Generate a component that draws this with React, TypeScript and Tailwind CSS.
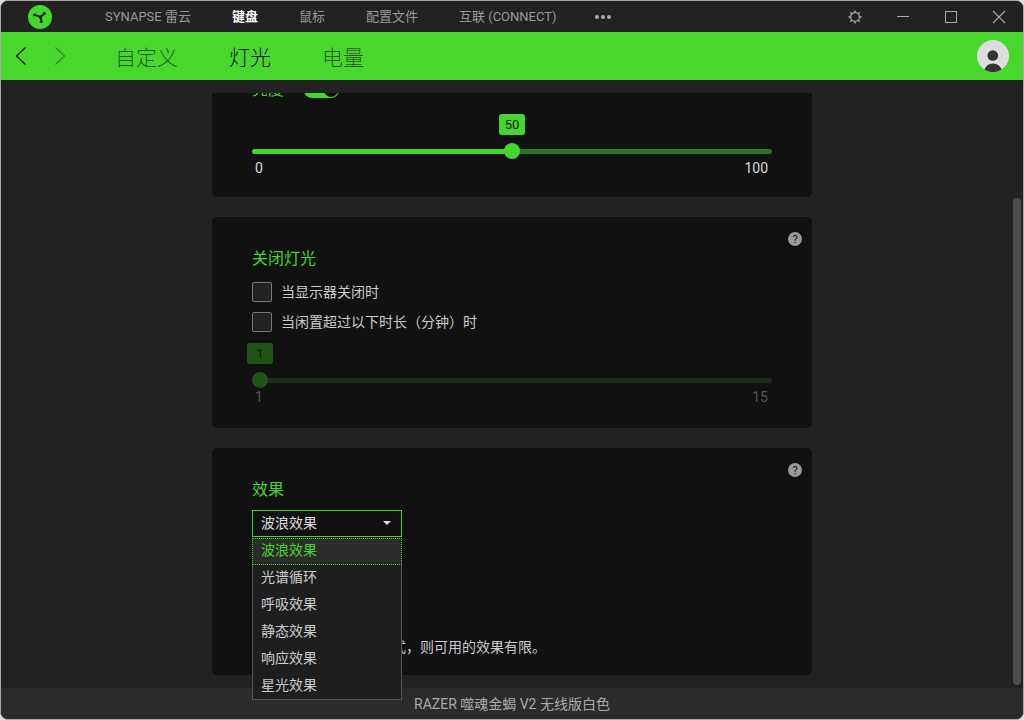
import React, { useState } from "react";
import clsx from "clsx";

const mainTabs = ["SYNAPSE 雷云", "键盘", "鼠标", "配置文件", "互联 (CONNECT)"];
const subTabs = ["自定义", "灯光", "电量"];
const effects = [
  "波浪效果",
  "光谱循环",
  "呼吸效果",
  "静态效果",
  "响应效果",
  "星光效果",
];

function Logo() {
  return (
    <svg width="24" height="24" viewBox="0 0 24 24" aria-hidden="true">
      <circle cx="12" cy="12" r="12" fill="#44d62c" />
      <g fill="none" stroke="#151a14" strokeLinecap="round">
        <path d="M12.6 12 6.6 9.8M12.6 12 16.4 8.4M12.6 12 13.4 16.4" strokeWidth="1.8" />
        <path d="M5.8 10.6 7 9.2M15.8 7.6 17.4 8.8M12.4 17.2 14.4 16.6" strokeWidth="1.6" />
      </g>
      <circle cx="12.4" cy="12" r="1.8" fill="#151a14" />
    </svg>
  );
}

function GearIcon() {
  return (
    <svg width="14" height="14" viewBox="0 0 14 14" fill="none" stroke="currentColor" aria-hidden="true">
      <circle cx="7" cy="7" r="4.4" strokeWidth="1.2" />
      <path
        d="M7 .4v2M7 11.6v2M.4 7h2M11.6 7h2M2.3 2.3l1.4 1.4M10.3 10.3l1.4 1.4M2.3 11.7l1.4-1.4M10.3 3.7l1.4-1.4"
        strokeWidth="1.5"
      />
    </svg>
  );
}

function WindowButton({ label, children }: { label: string; children: React.ReactNode }) {
  return (
    <button aria-label={label} className="flex h-full w-12 items-center justify-center text-[#a8a8a8]">
      {children}
    </button>
  );
}

function TitleBar() {
  return (
    <header className="flex h-[31px] items-center bg-[#222222] pl-[27px]">
      <Logo />
      <nav className="ml-[53px] flex items-center gap-[41px] text-[13px] leading-5 whitespace-nowrap">
        {mainTabs.map((tab) => (
          <a
            key={tab}
            href="#"
            className={clsx(tab === "键盘" ? "font-bold text-white" : "text-[#999999]")}
          >
            {tab}
          </a>
        ))}
      </nav>
      <button aria-label="更多" className="ml-[38px] flex gap-[2px]">
        <span className="size-1 rounded-full bg-[#aaaaaa]" />
        <span className="size-1 rounded-full bg-[#aaaaaa]" />
        <span className="size-1 rounded-full bg-[#aaaaaa]" />
      </button>
      <div className="ml-auto flex h-full">
        <WindowButton label="设置">
          <GearIcon />
        </WindowButton>
        <WindowButton label="最小化">
          <span className="h-px w-3 bg-current" />
        </WindowButton>
        <WindowButton label="最大化">
          <span className="size-3 border border-current" />
        </WindowButton>
        <WindowButton label="关闭">
          <svg width="14" height="14" viewBox="0 0 14 14" stroke="currentColor" strokeWidth="1.1" aria-hidden="true">
            <path d="M1 1l12 12M13 1L1 13" />
          </svg>
        </WindowButton>
      </div>
    </header>
  );
}

function SubBar() {
  return (
    <div className="flex h-12 items-center bg-[#47d72d] pr-[14px] pl-[14px] text-[#111111]">
      <button aria-label="后退">
        <svg width="12" height="20" viewBox="0 0 12 20" fill="none" stroke="currentColor" strokeWidth="1.2">
          <path d="M10.5 1.5 1.5 10l9 8.5" />
        </svg>
      </button>
      <button aria-label="前进" className="ml-[27px] opacity-40">
        <svg width="12" height="20" viewBox="0 0 12 20" fill="none" stroke="currentColor" strokeWidth="1.2">
          <path d="M1.5 1.5l9 8.5-9 8.5" />
        </svg>
      </button>
      <nav className="ml-[49px] flex gap-[51px] pt-[3px] text-[21px] leading-8 font-light whitespace-nowrap">
        {subTabs.map((tab) => (
          <a
            key={tab}
            href="#"
            className={clsx(tab === "灯光" ? "text-[#111111]" : "text-[#111111]/65")}
          >
            {tab}
          </a>
        ))}
      </nav>
      <button aria-label="个人资料" className="ml-auto">
        <svg width="32" height="32" viewBox="0 0 32 32">
          <circle cx="16" cy="16" r="16" fill="#dddddd" />
          <circle cx="15.8" cy="15.5" r="5.3" fill="#333333" />
          <path d="M7.4 29.5C9 25.5 12 23.4 16 23.4s7 2.1 8.6 6.1A16 16 0 0 1 7.4 29.5z" fill="#333333" />
        </svg>
      </button>
    </div>
  );
}

function HelpButton() {
  return (
    <button
      aria-label="帮助"
      className="absolute top-[15px] right-[10px] flex size-[14px] items-center justify-center rounded-full bg-[#999999] text-[11px] leading-none text-[#111111]"
    >
      ?
    </button>
  );
}

interface SliderProps {
  label: string;
  min: number;
  max: number;
  initial: number;
  disabled?: boolean;
}

function Slider({ label, min, max, initial, disabled }: SliderProps) {
  const [value, setValue] = useState(initial);
  const ratio = (value - min) / (max - min);
  const thumbLeft = `calc(8px + (100% - 16px) * ${ratio})`;
  const fill = disabled ? "#1d3218" : "#44d62c";
  const rest = disabled ? "#1b2c18" : "#2b7620";

  return (
    <div>
      <div className="relative h-[21px]">
        <output
          className={clsx(
            "absolute flex h-[21px] w-[26px] -translate-x-1/2 items-center justify-center rounded-[3px] text-[13px] text-[#111111]",
            disabled ? "bg-[#1f5416]" : "bg-[#44d62c]"
          )}
          style={{ left: thumbLeft }}
        >
          {value}
        </output>
      </div>
      <input
        type="range"
        aria-label={label}
        min={min}
        max={max}
        value={value}
        disabled={disabled}
        onChange={(e) => setValue(Number(e.target.value))}
        className={clsx(
          "mt-2 block h-4 w-full appearance-none bg-transparent",
          "[&::-webkit-slider-runnable-track]:h-[5px] [&::-webkit-slider-runnable-track]:rounded-full [&::-webkit-slider-runnable-track]:[background:var(--track)]",
          "[&::-webkit-slider-thumb]:-mt-[6px] [&::-webkit-slider-thumb]:size-4 [&::-webkit-slider-thumb]:appearance-none [&::-webkit-slider-thumb]:rounded-full",
          disabled
            ? "[&::-webkit-slider-thumb]:bg-[#1f5416]"
            : "[&::-webkit-slider-thumb]:bg-[#44d62c]"
        )}
        style={
          {
            "--track": `linear-gradient(to right, ${fill} ${ratio * 100}%, ${rest} ${ratio * 100}%)`,
          } as React.CSSProperties
        }
      />
      <div
        className={clsx(
          "flex justify-between pr-1 pl-[3px] text-sm leading-[18px]",
          disabled ? "text-[#555555]" : "text-[#dddddd]"
        )}
      >
        <span>{min}</span>
        <span>{max}</span>
      </div>
    </div>
  );
}

function Checkbox({ label }: { label: string }) {
  return (
    <label className="flex items-center gap-[9px] text-sm leading-5 text-[#cccccc]">
      <input
        type="checkbox"
        className="size-5 appearance-none rounded-xs border border-[#777777] bg-[#222222] checked:bg-[#44d62c]"
      />
      {label}
    </label>
  );
}

function CardTitle({ children }: { children: React.ReactNode }) {
  return <h2 className="text-base leading-5 text-[#44d62c]">{children}</h2>;
}

function BrightnessCard() {
  return (
    // scrolled part way out of view
    <div className="overflow-hidden">
      <section className="-mt-[45px] rounded-[5px] bg-[#111111] px-10 pt-8 pb-5">
        <div className="flex h-5 items-center gap-5">
          <CardTitle>亮度</CardTitle>
          <button
            role="switch"
            aria-checked="true"
            aria-label="亮度"
            className="flex h-4 w-[35px] items-center justify-end rounded-full bg-[#44d62c] p-px"
          >
            <span className="size-[14px] rounded-full bg-[#111111]" />
          </button>
        </div>
        <div className="mt-[14px]">
          <Slider label="亮度" min={0} max={100} initial={50} />
        </div>
      </section>
    </div>
  );
}

function SwitchOffCard() {
  return (
    <section className="relative rounded-[5px] bg-[#111111] px-10 pt-8 pb-[22px]">
      <HelpButton />
      <CardTitle>关闭灯光</CardTitle>
      <div className="mt-[13px] mb-[11px] flex flex-col gap-[10px]">
        <Checkbox label="当显示器关闭时" />
        <Checkbox label="当闲置超过以下时长（分钟）时" />
      </div>
      <Slider label="闲置时长" min={1} max={15} initial={1} disabled />
    </section>
  );
}

function EffectCard() {
  const [effect, setEffect] = useState(effects[0]);

  return (
    <section className="relative rounded-[5px] bg-[#111111] px-10 pt-8 pb-[18px]">
      <HelpButton />
      <CardTitle>效果</CardTitle>
      <div className="relative z-10 mt-[10px] w-[150px] text-sm">
        <select
          aria-label="效果"
          value={effect}
          onChange={(e) => setEffect(e.target.value)}
          className="block h-[27px] w-full appearance-none border border-[#44d62c] bg-[#111111] px-2 pb-[2px] leading-5 text-[#dddddd] outline-none"
        >
          {effects.map((name) => (
            <option key={name}>{name}</option>
          ))}
        </select>
        <span className="pointer-events-none absolute top-[11px] right-[11px] border-x-4 border-t-4 border-x-transparent border-t-[#dddddd]" />
        <ul
          role="listbox"
          aria-label="效果列表"
          className="absolute top-full left-0 mt-px w-full border border-t-0 border-[#555555] bg-[#1e1e1e]"
        >
          {effects.map((name) => (
            <li
              key={name}
              role="option"
              aria-selected={name === effect}
              onClick={() => setEffect(name)}
              className={clsx(
                "flex h-[27px] items-center px-2 pb-[3px] last:h-[26px]",
                name === effect
                  ? "-mx-px border border-dotted border-[#44d62c] bg-[#2b2b2b] text-[#44d62c]"
                  : "text-[#cccccc]"
              )}
            >
              {name}
            </li>
          ))}
        </ul>
      </div>
      <p className="mt-[100px] text-sm leading-5 text-[#cccccc]">
        如果您使用的是蓝牙模式，则可用的效果有限。
      </p>
    </section>
  );
}

export default function App() {
  return (
    <div className="min-h-screen bg-[#dddddd] font-['Roboto','Noto_Sans_CJK_SC',sans-serif]">
      <div className="flex min-h-screen flex-col overflow-hidden rounded-lg border border-[#a8a8a8] bg-[#222222]">
        <TitleBar />
        <SubBar />
        <main className="relative flex-1 py-[13px]">
          <div className="mx-auto flex w-full max-w-[600px] flex-col gap-5">
            <BrightnessCard />
            <SwitchOffCard />
            <EffectCard />
          </div>
          {/* Scrollbar thumb */}
          <div className="absolute top-[118px] right-[2px] bottom-[3px] w-2 rounded-full bg-[#4d4d4d]" />
        </main>
        <footer className="flex h-[31px] items-center justify-center bg-[#2b2b2b] text-sm text-[#aaaaaa]">
          RAZER 噬魂金蝎 V2 无线版白色
        </footer>
      </div>
    </div>
  );
}
